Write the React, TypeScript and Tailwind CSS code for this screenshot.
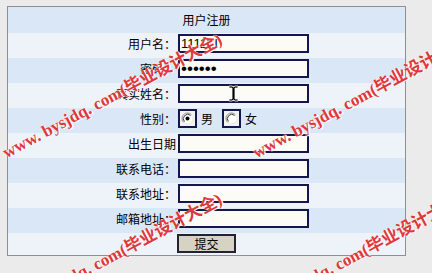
import React from 'react';

const labelFont = { fontFamily: '"Noto Sans CJK SC", "Liberation Sans", sans-serif' };

function RadioDot({ checked }: { checked?: boolean }) {
  return (
    <svg width="13" height="13" viewBox="0 0 13 13">
      <circle cx="6.5" cy="6.5" r="5.5" fill="#ffffff" />
      <path d="M10.4 2.6 A5.5 5.5 0 0 0 2.6 10.4" fill="none" stroke="#8a8a8a" strokeWidth="1" />
      <path d="M9.6 3.4 A4.4 4.4 0 0 0 3.4 9.6" fill="none" stroke="#3a3a3a" strokeWidth="1" />
      <path d="M2.6 10.4 A5.5 5.5 0 0 0 10.4 2.6" fill="none" stroke="#e8e8e8" strokeWidth="1" />
      {checked && <circle cx="6.5" cy="6.5" r="2" fill="#000000" />}
    </svg>
  );
}

function Field({ label, children, tone }: { label: string; children: React.ReactNode; tone: 'blue' | 'light' }) {
  return (
    <div className={`flex h-[25px] items-start pt-[1px] ${tone === 'blue' ? 'bg-[#dae7f7]' : 'bg-[#eef2f9]'}`}>
      <div className="flex h-[19px] w-[168px] items-center justify-end text-[12px] text-black" style={labelFont}>
        {label}
      </div>
      <div className="flex items-center pl-[2px]">{children}</div>
    </div>
  );
}

const inputCls =
  'h-[19px] w-[131px] border-2 border-[#16164e] bg-[#fcfbf5] px-[1px] text-[13px] text-black outline-none font-["Liberation_Sans",sans-serif]';

function Watermark({ x, y }: { x: number; y: number }) {
  return (
    <span
      className="pointer-events-none absolute origin-left whitespace-nowrap text-[17px] font-bold text-[#e0383a] [text-shadow:0_0_1px_#ffffff,1px_1px_0_#ffffff] font-['Liberation_Serif','Noto_Sans_CJK_SC',serif]"
      style={{ left: x, top: y, transform: 'rotate(-28deg)' }}
    >
      www. bysjdq. com(毕业设计大全)
    </span>
  );
}

export default function App() {
  return (
    <div className="relative h-[273px] w-[432px] overflow-hidden bg-[#ebebeb] pl-[7px] pt-[6px]">
      <div className="w-[399px] border border-[#8f8f8f]">
        <div className="flex h-[26px] items-center justify-center bg-[#d9e7f7] text-[12px] text-black" style={labelFont}>
          用户注册
        </div>
        <Field label="用户名：" tone="light">
          <input className={inputCls} defaultValue="111111" />
        </Field>
        <Field label="密码：" tone="blue">
          <input className={`${inputCls} !text-[17px] leading-none`} type="password" defaultValue="111111" />
        </Field>
        <Field label="真实姓名：" tone="light">
          <input className={inputCls} />
        </Field>
        <Field label="性别：" tone="blue">
          <span className="flex h-[19px] w-[19px] items-center justify-center border-2 border-[#16164e] bg-[#f2f2ee]">
            <RadioDot checked />
          </span>
          <span className="ml-[4px] text-[12px] text-black" style={labelFont}>男</span>
          <span className="ml-[9px] flex h-[19px] w-[19px] items-center justify-center border-2 border-[#16164e] bg-[#f2f2ee]">
            <RadioDot />
          </span>
          <span className="ml-[4px] text-[12px] text-black" style={labelFont}>女</span>
        </Field>
        <Field label="出生日期" tone="light">
          <input className={inputCls} />
        </Field>
        <Field label="联系电话：" tone="blue">
          <input className={inputCls} />
        </Field>
        <Field label="联系地址：" tone="light">
          <input className={inputCls} />
        </Field>
        <Field label="邮箱地址：" tone="blue">
          <input className={inputCls} />
        </Field>
        <div className="flex h-[22px] items-start bg-[#eef2f9] pt-[1px]">
          <div className="w-[168px]" />
          <div className="pl-[1px]">
            <button
              className="flex h-[19px] w-[59px] items-center justify-center border-2 border-[#222233] bg-[#d6d3c5] text-[12px] text-black"
              style={labelFont}
            >
              提交
            </button>
          </div>
        </div>
      </div>

      {/* text cursor over the 真实姓名 field */}
      <svg className="pointer-events-none absolute left-[228px] top-[85px]" width="11" height="17" viewBox="0 0 11 17">
        <path d="M1 1h3l1.5 1 1.5-1h3v2H7v11h3v2H7l-1.5-1L4 16H1v-2h3V3H1z" fill="#000" stroke="#fff" strokeWidth="0.8" />
      </svg>

      <Watermark x={4} y={141} />
      <Watermark x={254} y={141} />
      <Watermark x={4} y={301} />
      <Watermark x={246} y={301} />
    </div>
  );
}
